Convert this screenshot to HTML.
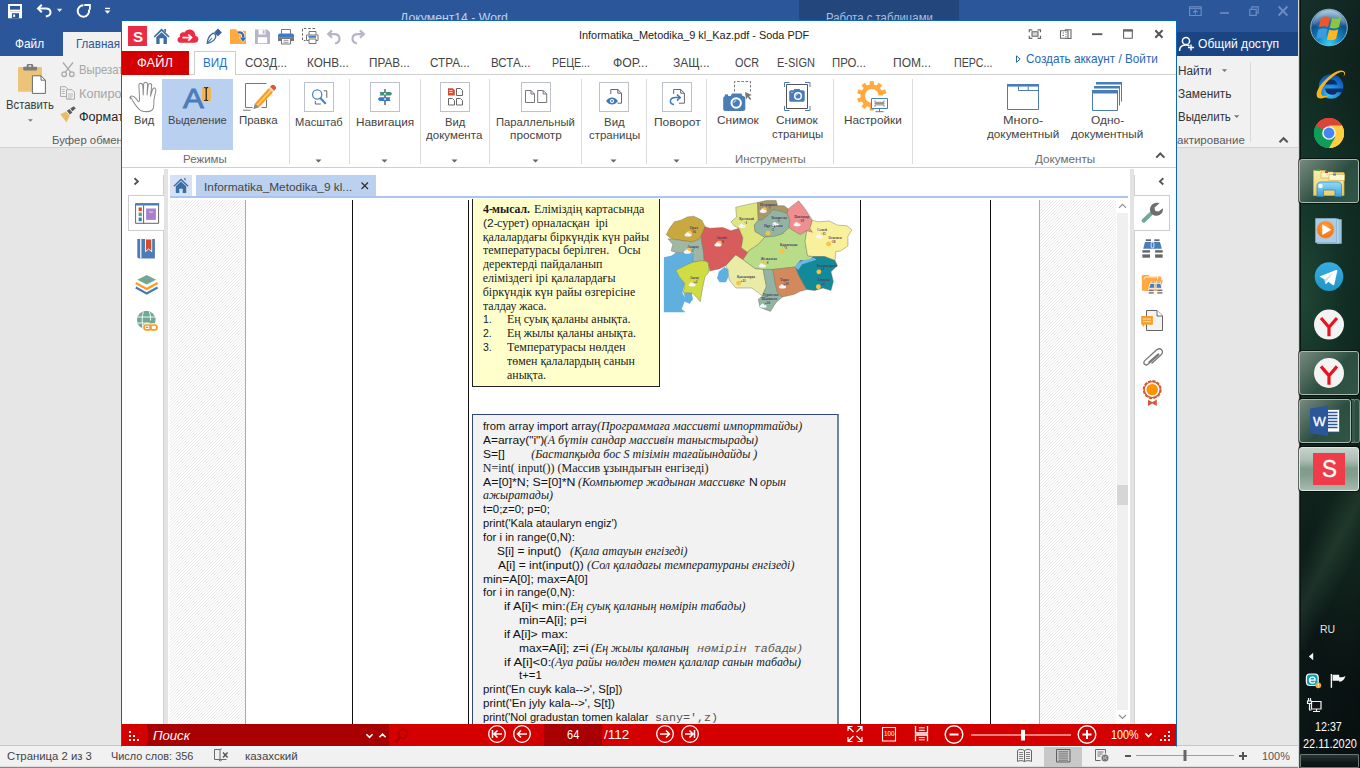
<!DOCTYPE html>
<html lang="ru">
<head>
<meta charset="utf-8">
<title>Informatika_Metodika_9 kl_Kaz.pdf - Soda PDF</title>
<style>
*{box-sizing:border-box;margin:0;padding:0}
html,body{width:1360px;height:768px;overflow:hidden;background:#e6e6e6;font-family:"Liberation Sans",sans-serif;font-size:12px;color:#444}
.g{position:absolute;left:0;top:0;width:0;height:0}
.a{position:absolute}
.t{position:absolute;white-space:pre;display:block}
svg{position:absolute;overflow:visible;pointer-events:none}
.hatch{background:repeating-linear-gradient(135deg,#fdfdfd 0,#fdfdfd 1.25px,#ebebeb 1.25px,#ebebeb 2.1213px)}

</style>
</head>
<body>
<section class="g" id="word-titlebar">
<div class="a" style="left:0px;top:0px;width:1299px;height:56px;background:#2b579a;"></div>
<div class="a" style="left:799px;top:0px;width:160px;height:32px;background:#23467d;"></div>
<span class="t" style="top:11px;font-size:12px;color:#c3d0e6;transform:scaleX(1.0202);transform-origin:0 0;left:399.58px;line-height:14px;">Документ14 - Word</span>
<span class="t" style="top:11px;font-size:12px;color:#aebfdc;transform:scaleX(0.9468);transform-origin:0 0;left:825.58px;line-height:14px;">Работа с таблицами</span>
<svg width="1360" height="768" viewBox="0 0 1360 768" style="left:0;top:0"><g fill="none" stroke="#fff">
<path d="M9 5h12v12.200h-12z" stroke-width="2"/><path d="M9 10.600h12" stroke-width="1.900"/>
<path d="M11.900 17.500v-4.300h7.100v4.300" stroke-width="0" fill="#fff"/>
<path d="M41.800 4.800l-3.800 3.700 3.800 3.700" stroke-width="2"/><path d="M38.500 8.500h7.300c2.800 0 4.700 1.700 4.700 4 0 2-1.600 3.500-4.700 4" stroke-width="2"/>
<path d="M83.400 5.300A5.700 5.700 0 1 0 88.900 9.500" stroke-width="2"/><path d="M84.300 5h5.600v4.800" stroke-width="1.800"/>
</g>
<rect x="10" y="11.500" width="10" height="6" fill="#fff"/><rect x="11.900" y="13.200" width="7.100" height="5" fill="#2b579a"/><rect x="13.200" y="14.500" width="1.900" height="2.400" fill="#fff"/>
<path d="M56.900 8.800h5.300l-2.650 3.100z" fill="#e6ecf6"/>
<path d="M105 8.400h5" stroke="#fff" stroke-width="1.300"/><path d="M104.600 10.600h5.800l-2.900 3.100z" fill="#fff"/>
<g fill="none" stroke="#6d8bc0" stroke-width="1.300">
<path d="M1189.600 6.900h11.600v8.600h-11.600z" stroke-width="1.100"/><path d="M1189.600 8.600h11.600" stroke-width="1"/><path d="M1193.200 12.400l2.200-2.200 2.200 2.200M1195.400 10.600v4" stroke-width="1.100"/>
<path d="M1220 13h9" stroke-width="1.700"/>
<path d="M1249.800 9.400h6.400v6h-6.400zM1251.800 9.400v-2.500h6.400v6h-2" stroke-width="1.200"/>
<path d="M1278.600 6.500l8.800 9M1287.400 6.500l-8.800 9" stroke-width="1.900"/>
</g></svg>
<span class="t" style="top:37px;font-size:12.2px;color:#fff;transform:scaleX(0.9695);transform-origin:0 0;left:14.87px;line-height:14px;">Файл</span>
<div class="a" style="left:63px;top:32px;width:70px;height:24px;background:#f1f1f1;"></div>
<span class="t" style="top:37px;font-size:12.2px;color:#2b579a;transform:scaleX(0.9496);transform-origin:0 0;left:76.07px;line-height:14px;">Главная</span>
<div class="a" style="left:1176px;top:32px;width:123px;height:24px;background:#1b4482;"></div>
<svg width="1360" height="768" viewBox="0 0 1360 768" style="left:0;top:0"><g fill="none" stroke="#fff" stroke-width="1.5"><circle cx="1186" cy="41" r="3.600"/><path d="M1179.500 51c0-4 2.800-6 6.500-6 1.500 0 2.600.3 3.500.9"/><path d="M1191 44.500v6M1188 47.500h6" stroke-width="1.4"/></g></svg>
<span class="t" style="top:37px;font-size:12.2px;color:#fff;transform:scaleX(0.9910);transform-origin:0 0;left:1197.77px;line-height:14px;">Общий доступ</span>
</section>
<section class="g" id="word-ribbon">
<div class="a" style="left:0px;top:56px;width:1299px;height:92px;background:#f1f1f1;border-bottom:1px solid #d2d2d2"></div>
<svg width="1360" height="768" viewBox="0 0 1360 768" style="left:0;top:0"><g>
<rect x="18" y="67" width="24" height="24.800" rx="1.200" fill="#ecc478"/>
<rect x="23.200" y="66.700" width="13.900" height="3.700" rx=".8" fill="#7b7b7b"/><path d="M26.700 67v-1.500c0-1 .6-1.500 1.500-1.500h3.500c.9 0 1.500.5 1.500 1.500v1.500z" fill="#7b7b7b"/><rect x="28.600" y="65.300" width="2.700" height="1.500" fill="#f1f1f1"/>
<path d="M32.400 75.800h8.600l4.400 4.400v13.200h-13z" fill="#fff" stroke="#6a6a6a" stroke-width="1"/><path d="M41 75.800v4.400h4.400" fill="none" stroke="#6a6a6a" stroke-width="1"/>
<path d="M28 119.200h4.800l-2.400 2.600z" fill="#777"/>
</g></svg>
<span class="t" style="top:98px;font-size:12px;color:#3a3a3a;transform:scaleX(0.9423);transform-origin:0 0;left:6.08px;line-height:14px;">Вставить</span>
<svg width="1360" height="768" viewBox="0 0 1360 768" style="left:0;top:0"><g fill="none" stroke="#aaa" stroke-width="1.300"><path d="M63 62.500l8.200 10.300M73 62.500l-8.200 10.300"/><circle cx="64.200" cy="74.200" r="2.300"/><circle cx="71.800" cy="74.200" r="2.300"/></g>
<g fill="#f1f1f1" stroke="#aaa" stroke-width="1"><path d="M60.500 86.700h5l2.200 2.200v7.600h-7.200z"/><path d="M61.800 89.500h3M61.800 91.500h3M61.800 93.500h3" stroke-width=".8"/><path d="M66.500 89.700h5.500l2.500 2.500v7h-8z"/><path d="M68 94h5M68 96h5M68 98h3.500" stroke-width=".8"/></g>
<g><path d="M60.300 114.200l5.800-2.600 3.600 4.200-3.200 6.600z" fill="#e9bb67"/><path d="M66.800 110.800l2.600-1.800 3 3.600-2.600 2z" fill="#5a5a5a"/><path d="M70.300 108.500l3.500-2.300 1.900 2.300-3.300 2.700z" fill="#5a5a5a"/></g></svg>
<span class="t" style="top:63px;font-size:12px;color:#a6a6a6;transform:scaleX(0.9450);transform-origin:0 0;left:78.98px;line-height:14px;">Вырезать</span>
<span class="t" style="top:87px;font-size:12px;color:#a6a6a6;transform:scaleX(1.0590);transform-origin:0 0;left:78.98px;line-height:14px;">Копировать</span>
<span class="t" style="top:110px;font-size:12px;color:#262626;transform:scaleX(1.0495);transform-origin:0 0;left:78.98px;line-height:14px;">Формат по образцу</span>
<span class="t" style="top:133px;font-size:11.8px;color:#5c5c5c;transform:scaleX(0.9620);transform-origin:0 0;left:52.29px;line-height:14px;">Буфер обмена</span>
<span class="t" style="top:64px;font-size:12px;color:#333;transform:scaleX(0.9793);transform-origin:0 0;left:1178.08px;line-height:14px;">Найти</span>
<span class="t" style="top:87px;font-size:12px;color:#333;transform:scaleX(0.9926);transform-origin:0 0;left:1177.58px;line-height:14px;">Заменить</span>
<span class="t" style="top:110px;font-size:12px;color:#333;transform:scaleX(0.9545);transform-origin:0 0;left:1178.08px;line-height:14px;">Выделить</span>
<svg width="1360" height="768" viewBox="0 0 1360 768" style="left:0;top:0"><path d="M1221.800 69.300h5.400l-2.700 2.700zM1234 115.200h5.400l-2.700 2.700z" fill="#777"/><path d="M1250.500 62v80" stroke="#d8d8d8"/><path d="M1279.500 142.300l4.100-4.100 4.100 4.100" fill="none" stroke="#555" stroke-width="2"/></svg>
<span class="t" style="top:133px;font-size:11.8px;color:#5c5c5c;transform:scaleX(0.9772);transform-origin:0 0;left:1157.09px;line-height:14px;">Редактирование</span>
</section>
<section class="g" id="word-statusbar">
<div class="a" style="left:0px;top:745px;width:1299px;height:1px;background:#c6c6c6;"></div>
<div class="a" style="left:0px;top:746px;width:1299px;height:22px;background:#f1f1f1;"></div>
<div class="a" style="left:0px;top:766px;width:1299px;height:1px;background:#dcdcdc;"></div>
<div class="a" style="left:0px;top:767px;width:1299px;height:1px;background:#858585;"></div>
<span class="t" style="top:750px;font-size:11.5px;color:#444;transform:scaleX(0.9849);transform-origin:0 0;left:7.00px;line-height:12px;">Страница 2 из 3</span>
<span class="t" style="top:750px;font-size:11.5px;color:#444;transform:scaleX(0.9465);transform-origin:0 0;left:111.10px;line-height:12px;">Число слов: 356</span>
<svg width="1360" height="768" viewBox="0 0 1360 768" style="left:0;top:0"><g fill="none" stroke="#6a6a6a" stroke-width="1"><path d="M214.500 749.500h5.500v10h-5.500zM220 749.500c.5-.3 1-.5 1.800-.5M220 759.500h6.500M218.500 759.500l1.800 1.800 1.800-1.800"/><path d="M223 752.600l4.600 4.800M227.600 752.600l-4.600 4.800" stroke="#555" stroke-width="1.500"/></g></svg>
<span class="t" style="top:750px;font-size:11.5px;color:#444;transform:scaleX(1.0045);transform-origin:0 0;left:245.10px;line-height:12px;">казахский</span>
<div class="a" style="left:1044px;top:746px;width:38px;height:21px;background:#c8c8c8;"></div>
<svg width="1360" height="768" viewBox="0 0 1360 768" style="left:0;top:0"><g fill="none" stroke="#666" stroke-width="1">
<path d="M1024.500 750.500c-2.500-1.500-5-1.500-7 0v11c2-1.200 4.500-1.200 7 0 2.500-1.200 5-1.200 7 0v-11c-2-1.500-4.500-1.500-7 0zv11"/><path d="M1019 752.500h4M1019 754.500h4M1019 756.500h4M1019 758.500h4M1026 752.500h4M1026 754.500h4M1026 756.500h4M1026 758.500h4" stroke-width=".8"/>
<path d="M1056.500 749.500h13.500v12.500h-13.500z" stroke="#5e5e5e"/><path d="M1058.500 751.800h9.500M1058.500 753.900h9.500M1058.500 756h9.500M1058.500 758.100h9.500M1058.500 760.200h9.500" stroke="#666" stroke-width=".9"/>
<path d="M1095.500 749.500h10v4M1095.500 749.500v11h5"/><path d="M1097.500 752h6M1097.500 754h5M1097.500 756h3" stroke-width=".9"/>
<circle cx="1105" cy="758" r="3.500" fill="#777" stroke="none"/><path d="M1103.500 756.500q1.500 1.500 0 3M1106 756q-1 2 .5 3.500" stroke="#f1f1f1" stroke-width=".7"/>
</g>
<path d="M1125 756h6" stroke="#555" stroke-width="2"/><path d="M1136 755.500h98" stroke="#a0a0a0" stroke-width="1"/><rect x="1183.500" y="750" width="3" height="11" fill="#666"/>
<path d="M1239 756h8M1243 752v8" stroke="#555" stroke-width="2"/></svg>
<span class="t" style="top:750px;font-size:11.5px;color:#555;transform:scaleX(0.9450);transform-origin:0 0;left:1261.60px;line-height:12px;">100%</span>
</section>
<section class="g" id="taskbar">
<div class="a" style="left:1299px;top:0px;width:61px;height:768px;background:#10221d;background:linear-gradient(180deg,#16302b 0,#132c24 8%,#14352a 20%,#163a2d 33%,#14362a 45%,#11291f 58%,#0e1f1a 70%,#0b1716 82%,#0a1414 100%);"></div>
<div class="a" style="left:1299px;top:0px;width:61px;height:768px;background:transparent;background:radial-gradient(ellipse 50px 130px at 60px 560px,rgba(40,80,60,.35),rgba(0,0,0,0) 100%),radial-gradient(ellipse 40px 90px at 5px 300px,rgba(60,110,80,.25),rgba(0,0,0,0) 100%);"></div>
<div class="a" style="left:1301px;top:0px;width:59px;height:768px;background:transparent;background:linear-gradient(90deg,rgba(0,0,0,0) 0,rgba(0,0,0,.12) 55%,rgba(0,0,0,.26) 100%);"></div>
<div class="a" style="left:1298px;top:0px;width:1px;height:768px;background:#d3dad8;"></div>
<div class="a" style="left:1299px;top:0px;width:1px;height:768px;background:#3a4a46;"></div>
<div class="a" style="left:1301px;top:470px;width:59px;height:180px;background:transparent;background:linear-gradient(118deg,rgba(0,0,0,0) 30%,rgba(70,110,85,.28) 48%,rgba(0,0,0,0) 66%);"></div>
<div class="a" style="left:1300px;top:0px;width:1px;height:768px;background:#0a1512;"></div>
<div class="a" style="left:1299px;top:159px;width:60px;height:44px;background:transparent;background:linear-gradient(135deg,#77897f 0,#4f6a5d 30%,#2c4e40 55%,#2f5646 100%);border:1px solid #a9b8b0;border-radius:3px;box-shadow:0 0 0 1px rgba(0,0,0,.55);"></div>
<div class="a" style="left:1299px;top:351px;width:60px;height:44px;background:transparent;background:linear-gradient(135deg,#77897f 0,#4f6a5d 30%,#2c4e40 55%,#2f5646 100%);border:1px solid #a9b8b0;border-radius:3px;box-shadow:0 0 0 1px rgba(0,0,0,.55);"></div>
<div class="a" style="left:1351px;top:399px;width:5px;height:44px;background:transparent;background:#35584a;border:1px solid #7d9388;border-left:none;border-radius:0 3px 3px 0;"></div>
<div class="a" style="left:1355px;top:399px;width:5px;height:44px;background:transparent;background:#2c4d40;border:1px solid #6f867b;border-left:none;border-radius:0 3px 3px 0;"></div>
<div class="a" style="left:1299px;top:399px;width:52px;height:44px;background:transparent;background:linear-gradient(135deg,#77897f 0,#4f6a5d 30%,#2c4e40 55%,#2f5646 100%);border:1px solid #a9b8b0;border-radius:3px;box-shadow:0 0 0 1px rgba(0,0,0,.55);"></div>
<div class="a" style="left:1299px;top:447px;width:60px;height:44px;background:transparent;background:linear-gradient(180deg,#c6d3cb 0,#aebfb4 28%,#7f9c8b 50%,#84a190 68%,#a6baad 100%);border:1px solid #dfe8e3;border-radius:3px;box-shadow:0 0 0 1px rgba(0,0,0,.55);"></div>
<div class="a" style="left:1300px;top:754px;width:59px;height:14px;background:transparent;background:linear-gradient(180deg,#2a3433,#10191a 60%,#0b1213);border:1px solid #6b7775;border-radius:1px;"></div>
<svg width="1360" height="768" viewBox="0 0 1360 768" style="left:0;top:0"><defs>
<radialGradient id="orb" cx=".5" cy=".95" r=".9"><stop offset="0" stop-color="#35d3f5"/><stop offset=".35" stop-color="#1386c4"/><stop offset=".7" stop-color="#0f4f8c"/><stop offset="1" stop-color="#6fa3c8"/></radialGradient>
<linearGradient id="orbhi" x1="0" y1="0" x2="0" y2="1"><stop offset="0" stop-color="#fff" stop-opacity=".75"/><stop offset="1" stop-color="#fff" stop-opacity=".05"/></linearGradient>
<radialGradient id="ieg" cx=".45" cy=".8" r=".8"><stop offset="0" stop-color="#3fc5f5"/><stop offset=".6" stop-color="#1477cf"/><stop offset="1" stop-color="#0d4fa6"/></radialGradient>
<linearGradient id="fold" x1="0" y1="0" x2="0" y2="1"><stop offset="0" stop-color="#fbefad"/><stop offset="1" stop-color="#edcf6a"/></linearGradient>
<linearGradient id="fbl" x1="0" y1="0" x2="0" y2="1"><stop offset="0" stop-color="#8fdcf9"/><stop offset="1" stop-color="#3f9fde"/></linearGradient>
<radialGradient id="wmp" cx=".5" cy=".35" r=".7"><stop offset="0" stop-color="#ffa640"/><stop offset="1" stop-color="#ee6a12"/></radialGradient>
<linearGradient id="tg" x1="0" y1="0" x2="0" y2="1"><stop offset="0" stop-color="#37aee2"/><stop offset="1" stop-color="#1e96c8"/></linearGradient>
</defs>
<!-- orb -->
<circle cx="1329" cy="27.500" r="18.300" fill="url(#orb)" stroke="#8fb0bd" stroke-width="1"/>
<path d="M1312.500 24a16.800 16.800 0 0 1 33 0c-8 5.500-25 5.500-33 0z" fill="url(#orbhi)" opacity=".55"/>
<g transform="translate(1329.700 28.400) scale(1.32) translate(-1328 -26.500)"><path d="M1321.500 18.500c2.300-1.200 4.500-1.400 6.800-.4l-1.600 7.400c-2.300-.9-4.600-.8-6.900.4z" fill="#f0562a"/>
<path d="M1329.800 18.600c2.300.9 4.600.8 6.900-.4l-1.700 7.400c-2.300 1.200-4.600 1.300-6.900.4z" fill="#8cc63f"/>
<path d="M1319.400 27.400c2.300-1.200 4.600-1.300 6.900-.4l-1.700 7.400c-2.300-.9-4.600-.8-6.900.4z" fill="#3a9be0"/>
<path d="M1327.600 27.500c2.300.9 4.600.8 6.900-.4l-1.700 7.400c-2.300 1.200-4.600 1.300-6.900.4z" fill="#fcb81e"/></g>
<!-- IE -->
<circle cx="1331" cy="86.500" r="12.200" fill="url(#ieg)"/>
<path d="M1325 84.600c.6-3.200 3-5.200 6.200-5.200s5.600 2 6.100 5.200z" fill="#0b2f6e"/>
<path d="M1325 88.600h18.500c-.1 1.300-.4 2.500-.9 3.600h-5.500c-1 1.600-2.800 2.600-5.300 2.600-3.700 0-6.300-2.400-6.800-6.200z" fill="#0b2f6e"/>
<path d="M1345 72.500c-1.500-3.500-8-2.500-15.500 3.500-8.500 6.800-14.500 16-12.500 20.500 1.600 3.500 7.500 2 13-1.500-4 1.500-7.500 1.500-8.500-.8-1.500-3.500 3-10.500 10-16.500 6-5 11.500-7 12.500-4.500.4 1-.1 2.500-.8 4 1.500-2 2.300-3.600 1.800-4.700z" fill="#f7b51b"/>
<!-- chrome -->
<circle cx="1329" cy="133" r="15" fill="#db4437"/><path d="M1329 133L1316.01 125.50A15 15 0 0 1 1341.99 125.50z" fill="#db4437"/><path d="M1329 133L1341.99 125.50A15 15 0 0 1 1329.00 148.00z" fill="#ffcd40"/><path d="M1329 133L1329.00 148.00A15 15 0 0 1 1316.01 125.50z" fill="#0f9d58"/>
<path d="M1329 133L1316.010 125.500A15 15 0 0 1 1341.990 125.500z" fill="#db4437"/>
<path d="M1316.010 125.500A15 15 0 0 1 1341.990 125.500L1329 125.500z" fill="#db4437"/>
<path d="M1341.990 125.500A15 15 0 0 1 1329 148L1335.500 136.750 1329 133z" fill="#ffcd40"/>
<path d="M1341.990 125.500L1329 125.500 1335.500 136.750 1329 148A15 15 0 0 0 1341.990 125.500z" fill="#ffcd40"/>
<path d="M1329 148A15 15 0 0 1 1316.010 125.500L1322.500 136.750 1329 133z" fill="#0f9d58"/>
<path d="M1316.010 125.500L1322.500 136.750 1335.500 136.750 1329 148A15 15 0 0 1 1316.010 125.500z" fill="#0f9d58"/>
<circle cx="1329" cy="133" r="6.800" fill="#f1f1f1"/><circle cx="1329" cy="133" r="5.400" fill="#4285f4"/>
<!-- explorer -->
<path d="M1313.500 170.500h12l1.500 2h17v23h-30.500z" fill="url(#fold)" stroke="#c9a94a" stroke-width=".8"/>
<path d="M1321 172h12l1.500 2h10v4h-23.500z" fill="#fdf3c0" stroke="#c9a94a" stroke-width=".6"/>
<path d="M1329 174.500h15.500v6h-15.500z" fill="#fff7cf" stroke="#c9a94a" stroke-width=".6"/>
<rect x="1316.500" y="169" width="3.500" height="2" fill="#1fb141"/><rect x="1325" y="171" width="3" height="2" fill="#e03a2c"/><rect x="1333" y="173.500" width="3" height="2" fill="#2f8fe8"/>
<path d="M1317 196.500v-10.500c0-2.500 1.500-4 4-4h16.500c2.500 0 4 1.500 4 4v10.500h-6.500v-6.500h-11.500v6.500z" fill="url(#fbl)" stroke="#2c7fc0" stroke-width=".7"/>
<circle cx="1320.500" cy="186" r="2.300" fill="#fff" opacity=".9"/>
<!-- WMP -->
<path d="M1318.500 219.500h23v24h-23z" fill="#9fc6de" stroke="#7aa6c4" stroke-width=".6"/>
<path d="M1317 219h22v24.500h-22z" fill="#b5d6ea" stroke="#86b2cf" stroke-width=".6"/>
<path d="M1315.500 218.500h21v24h-21z" fill="#a9cde5" stroke="#7eaccb" stroke-width=".7"/>
<circle cx="1325.500" cy="229.700" r="8.600" fill="url(#wmp)" stroke="#e8a96a" stroke-width=".8"/>
<path d="M1322.300 224.300v10.800l9-5.400z" fill="#fff"/>
<!-- telegram -->
<circle cx="1329" cy="276.600" r="14.300" fill="url(#tg)"/>
<path d="M1319.500 276.500l16.500-6.500c.9-.3 1.400.2 1.200 1.200l-2.800 13c-.2 1-.9 1.200-1.700.7l-4.300-3.200-2.100 2c-.4.400-.8.300-.9-.3l-.9-3.800z" fill="#fff"/>
<path d="M1324.500 279.600l9.300-7-7 8-1.400 3z" fill="#c8daea"/>
<!-- yandex x2 -->
<circle cx="1329" cy="324.600" r="15" fill="#f3f3f3"/><path d="M1321 318l8 9.300v9M1337 318l-8 9.300" fill="none" stroke="#e8121d" stroke-width="3.200" stroke-linecap="butt"/>
<circle cx="1329" cy="373" r="15" fill="#f3f3f3"/><path d="M1321 366.400l8 9.300v9M1337 366.400l-8 9.300" fill="none" stroke="#e8121d" stroke-width="3.200"/>
<!-- word -->
<path d="M1326 409.500h13.500v22.500h-13.500z" fill="#fff" stroke="#2b579a" stroke-width=".8"/>
<path d="M1328 412.500h9.500M1328 415.500h9.500M1328 418.500h9.500M1328 421.500h9.500M1328 424.500h9.500M1328 427.500h9.500" stroke="#2b579a" stroke-width="1.300"/>
<path d="M1310 408.500l18-2.800v30.300l-18-2.800z" fill="#2b579a"/>
<!-- soda -->
<rect x="1313" y="453" width="32" height="32" fill="#ee3d48"/>
<!-- tray -->
<path d="M1313.200 652.800v7.400l-4.400-3.700z" fill="#f2f2f2"/>
<rect x="1305.800" y="673.500" width="13" height="12.500" rx="4" fill="#fff"/><rect x="1307" y="674.600" width="10.600" height="10.300" rx="3.200" fill="#0f9fb4"/>
<path d="M1309.600 680.200h5.500c0-2-1.100-3.100-2.700-3.100-1.700 0-2.900 1.200-2.900 3 0 1.800 1.200 3 3 3 1 0 1.900-.4 2.400-1.200" fill="none" stroke="#fff" stroke-width="1.300"/>
<circle cx="1318.300" cy="685.300" r="2.900" fill="#f5a623"/><path d="M1318.300 683.600v2" stroke="#fff" stroke-width=".9"/><circle cx="1318.300" cy="686.700" r=".5" fill="#fff"/>
<path d="M1331.400 674v13.800" stroke="#f4f4f4" stroke-width="1.400"/><path d="M1332.600 674.800h6.600v2.200c2 .7 4 .3 6.200-.9-.8 3.600-3 5.800-6.200 5.600v-.9h-6.600z" fill="#f4f4f4"/>
<g fill="none" stroke="#f2f2f2" stroke-width="1.200"><path d="M1311.500 701.500h9.500v7.500h-9.500z" fill="#111"/><path d="M1313 711.500h7M1316.500 709v2.500"/><path d="M1308.500 698v3M1310.500 698v3M1307.500 701h4v2.500h-4zM1309.500 703.500v6.500h2"/></g>
</svg>
<span class="t" style="top:414px;font-size:13px;color:#fff;transform:scaleX(1.0431);transform-origin:0 0;left:1312.85px;line-height:15px;-webkit-text-stroke:.3px #fff;">W</span>
<span class="t" style="top:456px;font-size:23.6px;color:#fff;transform:scaleX(0.9493);transform-origin:0 0;left:1321.97px;line-height:26px;-webkit-text-stroke:.35px #fff;">S</span>
<span class="t" style="top:623px;font-size:11.5px;color:#e2e2e2;transform:scaleX(0.9086);transform-origin:0 0;left:1320.30px;line-height:12px;">RU</span>
<span class="t" style="top:720px;font-size:12px;color:#fff;transform:scaleX(0.8937);transform-origin:0 0;left:1315.08px;line-height:14px;">12:37</span>
<span class="t" style="top:737px;font-size:12px;color:#fff;transform:scaleX(0.9099);transform-origin:0 0;left:1302.58px;line-height:14px;">22.11.2020</span>
</section>
<section class="g" id="soda-window">
<div class="a" style="left:121px;top:20px;width:1056px;height:727px;background:#fff;border:1px solid #0b66c2;border-bottom:1px solid #f6fbfb;"></div>
</section>
<section class="g" id="soda-titlebar">
<div class="a" style="left:128px;top:26px;width:19px;height:20px;background:#ea2c44;"></div>
<span class="t" style="top:29px;font-size:14.6px;color:#fff;font-weight:700;transform:scaleX(1.0398);transform-origin:0 0;left:133.29px;line-height:16px;">S</span>
<svg width="1360" height="768" viewBox="0 0 1360 768" style="left:0;top:0"><!-- home -->
<g fill="#3a6ea5"><path d="M161.600 28.600l8 7.800-1.200 1.200-6.800-6.500-6.800 6.500-1.200-1.200z"/><path d="M156.300 37.300l5.300-5 5.300 5v6.700h-3.400v-5.700h-3.900v5.700h-3.300z"/><path d="M164.200 29h1.800v3.400l-1.800-1.700z"/></g>
<!-- cloud -->
<path d="M181 42.800h13.500c2.400 0 3.900-1.600 3.900-3.500 0-1.800-1.200-3.200-3-3.500 0-3.700-2.500-6.300-5.800-6.300-2.200 0-4 1.100-5 3-.5-.2-1-.3-1.500-.3-1.900 0-3.300 1.400-3.300 3.200 0 .6.100 1.100.4 1.600h-0.200c-1.500 0-2.500 1.300-2.500 2.900s1.300 2.900 3.500 2.900z" fill="#ea2c44"/>
<path d="M182.400 37.600h8.800" stroke="#fff" stroke-width="1.700"/><path d="M188.300 34.500l3.200 3.100-3.200 3.100" fill="none" stroke="#fff" stroke-width="1.700"/>
<!-- pen -->
<path d="M218 28.500l3.900 3.900-3.900 3.900-3.900-3.900z" fill="#3a62a0"/>
<path d="M215.700 35c.8 4-3.500 7.600-8.500 8.400.2-4.200 2.300-8 6-10.300z" fill="#fff" stroke="#3a6ea5" stroke-width="1.300" stroke-linejoin="round"/><path d="M207.400 43.200l4.600-5.200" stroke="#3a6ea5" stroke-width="1.100"/>
<!-- folder -->
<path d="M230 29.200h6l1.200 1.600h8.800v13.200h-16z" fill="#ffa93f"/>
<path d="M238 32.600c3.500-.9 5.700 1 5.200 5" fill="none" stroke="#fff" stroke-width="4"/><path d="M238.800 36.900h8.600l-4.300 5.900z" fill="#fff"/>
<path d="M238 32.600c3.500-.9 5.700 1 5.200 5" fill="none" stroke="#3a6ea5" stroke-width="2.400"/><path d="M239.800 37.400h6.600l-3.300 4.500z" fill="#3a6ea5"/>
<!-- save -->
<path d="M255 29.500h12.200l2.800 2.800v11.700h-15z" fill="#b6b4c6"/><path d="M258.500 29.500h7v5h-7z" fill="#fff"/><path d="M262.700 30.300h1.800v3.300h-1.800z" fill="#b6b4c6"/><path d="M257.800 37.200h9.400v6h-9.400z" fill="#fff"/>
<!-- printer -->
<path d="M281.500 34v-4.500h9v4.500" fill="#fff" stroke="#777" stroke-width="1"/>
<path d="M278 35.500c0-1.200.8-2 2-2h12c1.200 0 2 .8 2 2v2h-16z" fill="#3f7cc4"/><path d="M278 37.300h16v3.700h-16z" fill="#757575"/>
<path d="M281.500 38.500h9v5.500h-9z" fill="#fff" stroke="#777" stroke-width="1"/><path d="M283.500 40.300h5M283.500 42.300h5" stroke="#777" stroke-width=".8"/>
<!-- print area -->
<path d="M315 28.500h-12.500v12h3" fill="none" stroke="#666" stroke-width="1" stroke-dasharray="2.500 1.800"/>
<path d="M309 35v-3.500h7v3.500" fill="#fff" stroke="#777" stroke-width="1"/><path d="M306.500 35h11.500v5.500h-11.500z" fill="#fff" stroke="#777" stroke-width="1"/><path d="M308.500 35.800h7.500v2h-7.500z" fill="#3f7cc4"/><path d="M309 39h7v4.500h-7z" fill="#fff" stroke="#777" stroke-width="1"/>
<!-- undo / redo -->
<g fill="none" stroke="#b6b4c6" stroke-width="2.200"><path d="M332 30.500l-3.800 3.600 3.800 3.600"/><path d="M328.500 34.100h5.500c3.500 0 5.500 2 5.500 4.600 0 2.200-1.500 4-4.500 4.800"/>
<path d="M360 30.500l3.800 3.600-3.800 3.600"/><path d="M363.500 34.100h-5.500c-3.500 0-5.500 2-5.500 4.600 0 2.200 1.500 4 4.500 4.800"/></g>
<!-- window controls -->
<g fill="none" stroke="#666" stroke-width="1.200"><path d="M1029.300 32.300v-2.500h3M1037.500 29.800h3v2.500M1040.500 35.800v2.500h-3M1032.300 38.300h-3v-2.500"/><path d="M1032 31.800h6v4.500h-6z" fill="#d4d4d4" stroke-width="1.100"/></g>
<g fill="#fff" stroke="#666" stroke-width="1.100"><path d="M1065.500 29.800h5.500v8.700h-5.500z"/><path d="M1060.500 30.800h7.500v7.500h-7.500z"/><path d="M1062.500 33h1.500M1062.500 35.500h1.500M1065.500 32.500h1M1065.500 34.500h1M1065.500 36.500h1" stroke-width=".9"/></g>
<path d="M1092 34.200h10.300" stroke="#555" stroke-width="1.800"/>
<path d="M1123.600 30.500h8.700v7.700h-8.700z" fill="none" stroke="#666" stroke-width="1.100"/><path d="M1123 30.400h9.900" stroke="#666" stroke-width="2.400"/>
<path d="M1155.300 30.300l7.200 7.500M1162.500 30.300l-7.200 7.500" stroke="#555" stroke-width="2"/>
</svg>
<span class="t" style="top:29px;font-size:10.8px;color:#222;transform:scaleX(1.0096);transform-origin:0 0;left:578.62px;line-height:12px;">Informatika_Metodika_9 kl_Kaz.pdf - Soda PDF</span>
</section>
<section class="g" id="soda-tabs">
<div class="a" style="left:122px;top:74px;width:1054px;height:1px;background:#cfcfcf;"></div>
<div class="a" style="left:122px;top:51px;width:67px;height:24px;background:#d40000;"></div>
<span class="t" style="top:56px;font-size:12.5px;color:#fff;transform:scaleX(1.0319);transform-origin:0 0;left:136.56px;line-height:14px;">ФАЙЛ</span>
<div class="a" style="left:194px;top:51px;width:42px;height:24px;background:#fff;border:1px solid #cdcdcd;border-bottom:none;"></div>
<span class="t" style="top:56px;font-size:12.5px;color:#1f6fd0;transform:scaleX(0.9333);transform-origin:0 0;left:203.36px;line-height:14px;">ВИД</span>
<span class="t" style="top:56px;font-size:12.5px;color:#444;transform:scaleX(0.9322);transform-origin:0 0;left:244.56px;line-height:14px;">СОЗД...</span>
<span class="t" style="top:56px;font-size:12.5px;color:#444;transform:scaleX(0.9377);transform-origin:0 0;left:306.56px;line-height:14px;">КОНВ...</span>
<span class="t" style="top:56px;font-size:12.5px;color:#444;transform:scaleX(0.9376);transform-origin:0 0;left:368.56px;line-height:14px;">ПРАВ...</span>
<span class="t" style="top:56px;font-size:12.5px;color:#444;transform:scaleX(0.9379);transform-origin:0 0;left:429.56px;line-height:14px;">СТРА...</span>
<span class="t" style="top:56px;font-size:12.5px;color:#444;transform:scaleX(0.9261);transform-origin:0 0;left:490.56px;line-height:14px;">ВСТА...</span>
<span class="t" style="top:56px;font-size:12.5px;color:#444;transform:scaleX(0.8476);transform-origin:0 0;left:551.56px;line-height:14px;">РЕЦЕ...</span>
<span class="t" style="top:56px;font-size:12.5px;color:#444;transform:scaleX(0.9789);transform-origin:0 0;left:612.56px;line-height:14px;">ФОР...</span>
<span class="t" style="top:56px;font-size:12.5px;color:#444;transform:scaleX(0.9643);transform-origin:0 0;left:673.26px;line-height:14px;">ЗАЩ...</span>
<span class="t" style="top:56px;font-size:12.5px;color:#444;transform:scaleX(0.8666);transform-origin:0 0;left:735.06px;line-height:14px;">OCR</span>
<span class="t" style="top:56px;font-size:12.5px;color:#444;transform:scaleX(0.8795);transform-origin:0 0;left:776.56px;line-height:14px;">E-SIGN</span>
<span class="t" style="top:56px;font-size:12.5px;color:#444;transform:scaleX(0.9105);transform-origin:0 0;left:832.16px;line-height:14px;">ПРО...</span>
<span class="t" style="top:56px;font-size:12.5px;color:#444;transform:scaleX(0.9603);transform-origin:0 0;left:892.96px;line-height:14px;">ПОМ...</span>
<span class="t" style="top:56px;font-size:12.5px;color:#444;transform:scaleX(0.8556);transform-origin:0 0;left:954.16px;line-height:14px;">ПЕРС...</span>
<svg width="1360" height="768" viewBox="0 0 1360 768" style="left:0;top:0"><path d="M1016.500 55.900l3.600 3.200-3.600 3.200z" fill="none" stroke="#2468b8" stroke-width="1"/></svg>
<span class="t" style="top:52px;font-size:12.2px;color:#2468b8;transform:scaleX(0.9643);transform-origin:0 0;left:1026.07px;line-height:14px;">Создать аккаунт / Войти</span>
</section>
<section class="g" id="soda-ribbon">
<div class="a" style="left:122px;top:167px;width:1054px;height:1px;background:#cfcfcf;"></div>
<div class="a" style="left:162px;top:79px;width:71px;height:71px;background:#bad0f0;"></div>
<div class="a" style="left:289px;top:79px;width:1px;height:85px;background:#dcdcdc;"></div>
<div class="a" style="left:349px;top:79px;width:1px;height:85px;background:#dcdcdc;"></div>
<div class="a" style="left:420px;top:79px;width:1px;height:85px;background:#dcdcdc;"></div>
<div class="a" style="left:489px;top:79px;width:1px;height:85px;background:#dcdcdc;"></div>
<div class="a" style="left:581px;top:79px;width:1px;height:85px;background:#dcdcdc;"></div>
<div class="a" style="left:646px;top:79px;width:1px;height:85px;background:#dcdcdc;"></div>
<div class="a" style="left:706px;top:79px;width:1px;height:85px;background:#dcdcdc;"></div>
<div class="a" style="left:833px;top:79px;width:1px;height:85px;background:#dcdcdc;"></div>
<div class="a" style="left:912px;top:79px;width:1px;height:85px;background:#dcdcdc;"></div>
<div class="a" style="left:304px;top:82px;width:30px;height:30px;background:#fff;border:1px solid #bdc1cb;"></div>
<div class="a" style="left:370px;top:82px;width:30px;height:30px;background:#fff;border:1px solid #bdc1cb;"></div>
<div class="a" style="left:440px;top:82px;width:30px;height:30px;background:#fff;border:1px solid #bdc1cb;"></div>
<div class="a" style="left:521px;top:82px;width:30px;height:30px;background:#fff;border:1px solid #bdc1cb;"></div>
<div class="a" style="left:599px;top:82px;width:30px;height:30px;background:#fff;border:1px solid #bdc1cb;"></div>
<div class="a" style="left:662px;top:82px;width:30px;height:30px;background:#fff;border:1px solid #bdc1cb;"></div>
<span class="t" style="top:114px;font-size:10.7px;color:#444;transform:scaleX(1.0468);transform-origin:0 0;left:134.13px;line-height:12px;">Вид</span>
<span class="t" style="top:114px;font-size:10.7px;color:#444;transform:scaleX(1.0372);transform-origin:0 0;left:168.13px;line-height:12px;">Выделение</span>
<span class="t" style="top:114px;font-size:10.7px;color:#444;transform:scaleX(1.0731);transform-origin:0 0;left:239.13px;line-height:12px;">Правка</span>
<span class="t" style="top:153px;font-size:10.7px;color:#6b6b6b;transform:scaleX(1.0765);transform-origin:0 0;left:183.13px;line-height:12px;">Режимы</span>
<span class="t" style="top:116px;font-size:10.7px;color:#444;transform:scaleX(1.0441);transform-origin:0 0;left:295.13px;line-height:12px;">Масштаб</span>
<span class="t" style="top:116px;font-size:10.7px;color:#444;transform:scaleX(1.1033);transform-origin:0 0;left:355.63px;line-height:12px;">Навигация</span>
<span class="t" style="top:116px;font-size:10.7px;color:#444;transform:scaleX(1.0520);transform-origin:0 0;left:445.23px;line-height:12px;">Вид</span>
<span class="t" style="top:129px;font-size:10.7px;color:#444;transform:scaleX(1.0810);transform-origin:0 0;left:426.43px;line-height:12px;">документа</span>
<span class="t" style="top:116px;font-size:10.7px;color:#444;transform:scaleX(1.0509);transform-origin:0 0;left:496.13px;line-height:12px;">Параллельный</span>
<span class="t" style="top:129px;font-size:10.7px;color:#444;transform:scaleX(1.1029);transform-origin:0 0;left:509.63px;line-height:12px;">просмотр</span>
<span class="t" style="top:116px;font-size:10.7px;color:#444;transform:scaleX(1.0726);transform-origin:0 0;left:603.63px;line-height:12px;">Вид</span>
<span class="t" style="top:129px;font-size:10.7px;color:#444;transform:scaleX(1.0719);transform-origin:0 0;left:588.63px;line-height:12px;">страницы</span>
<span class="t" style="top:116px;font-size:10.7px;color:#444;transform:scaleX(1.1214);transform-origin:0 0;left:653.63px;line-height:12px;">Поворот</span>
<span class="t" style="top:114px;font-size:10.7px;color:#444;transform:scaleX(1.1115);transform-origin:0 0;left:717.13px;line-height:12px;">Снимок</span>
<span class="t" style="top:114px;font-size:10.7px;color:#444;transform:scaleX(1.1115);transform-origin:0 0;left:776.13px;line-height:12px;">Снимок</span>
<span class="t" style="top:128px;font-size:10.7px;color:#444;transform:scaleX(1.0719);transform-origin:0 0;left:771.63px;line-height:12px;">страницы</span>
<span class="t" style="top:153px;font-size:10.7px;color:#6b6b6b;transform:scaleX(1.0616);transform-origin:0 0;left:735.13px;line-height:12px;">Инструменты</span>
<span class="t" style="top:114px;font-size:10.7px;color:#444;transform:scaleX(1.1019);transform-origin:0 0;left:844.13px;line-height:12px;">Настройки</span>
<span class="t" style="top:114px;font-size:10.7px;color:#444;transform:scaleX(1.1865);transform-origin:0 0;left:1003.13px;line-height:12px;">Много-</span>
<span class="t" style="top:128px;font-size:10.7px;color:#444;transform:scaleX(1.0973);transform-origin:0 0;left:986.63px;line-height:12px;">документный</span>
<span class="t" style="top:114px;font-size:10.7px;color:#444;transform:scaleX(1.1182);transform-origin:0 0;left:1091.13px;line-height:12px;">Одно-</span>
<span class="t" style="top:128px;font-size:10.7px;color:#444;transform:scaleX(1.0973);transform-origin:0 0;left:1070.63px;line-height:12px;">документный</span>
<span class="t" style="top:153px;font-size:10.7px;color:#6b6b6b;transform:scaleX(1.0936);transform-origin:0 0;left:1034.63px;line-height:12px;">Документы</span>
<svg width="1360" height="768" viewBox="0 0 1360 768" style="left:0;top:0"><path d="M315.500 159.500h6l-3 3zM381.500 159.500h6l-3 3zM451.500 159.500h6l-3 3zM532.500 159.500h6l-3 3zM610.500 159.500h6l-3 3zM673.500 159.500h6l-3 3z" fill="#666"/><path d="M1156.200 157.600l4.100-4.100 4.100 4.100" fill="none" stroke="#555" stroke-width="2"/></svg>
</section>
<section class="g" id="soda-doctabs">
<div class="a" style="left:164px;top:169px;width:4px;height:555px;background:#e3e3e3;"></div>
<div class="a" style="left:1130px;top:169px;width:4px;height:555px;background:#e3e3e3;"></div>
<div class="a" style="left:170px;top:175px;width:22px;height:22px;background:#d6e2f4;"></div>
<div class="a" style="left:196px;top:175px;width:180px;height:22px;background:#bcd1f0;"></div>
<div class="a" style="left:170px;top:196px;width:958px;height:2px;background:#aac5ef;"></div>
<svg width="1360" height="768" viewBox="0 0 1360 768" style="left:0;top:0"><g fill="#3a6ea5"><path d="M181 178.500l7.600 7.300-.9.900-6.700-6.300-6.700 6.300-.9-.9z"/><path d="M175.800 186.300l5.200-4.900 5.200 4.900v6.700h-3.500v-4.300h-3.400v4.300h-3.500z"/><path d="M184 178.300h1.600v2.500l-1.600-1.500z"/></g>
<path d="M361.500 182.500l6.500 6.500M368 182.500l-6.500 6.500" stroke="#333" stroke-width="1.300"/>
<path d="M134.500 178.300l3.400 3.100-3.400 3.100" fill="none" stroke="#555" stroke-width="1.900"/>
<path d="M1163.300 178.300l-3.400 3.100 3.400 3.100" fill="none" stroke="#555" stroke-width="1.900"/></svg>
<span class="t" style="top:181px;font-size:11px;color:#454545;transform:scaleX(1.0777);transform-origin:0 0;left:203.62px;line-height:12px;">Informatika_Metodika_9 kl...</span>
</section>
<section class="g" id="soda-sidepanels">
<div class="a" style="left:163px;top:175px;width:1px;height:549px;background:#d2d2d2;"></div>
<div class="a" style="left:128px;top:195px;width:36px;height:36px;background:#fff;border:1px solid #cdcdcd;border-right:none;"></div>
<div class="a" style="left:1134px;top:175px;width:1px;height:549px;background:#d2d2d2;"></div>
<div class="a" style="left:1134px;top:195px;width:36px;height:36px;background:#fff;border:1px solid #cdcdcd;border-left:none;"></div>
</section>
<section class="g" id="soda-document">
<div class="a hatch" style="left:170px;top:199.500px;width:75px;height:524.500px"></div>
<div class="a hatch" style="left:1040px;top:199.500px;width:76px;height:524.500px"></div>
<div class="a" style="left:245px;top:200px;width:1px;height:524px;background:#ababab;"></div>
<div class="a" style="left:1039px;top:200px;width:1px;height:524px;background:#ababab;"></div>
<div class="a" style="left:1117px;top:199px;width:11px;height:525px;background:#fff;"></div>
<div class="a" style="left:1117px;top:213px;width:11px;height:497px;background:#f0f0f0;"></div>
<div class="a" style="left:1117px;top:485px;width:11px;height:20px;background:#d6d6d6;"></div>
<svg width="1360" height="768" viewBox="0 0 1360 768" style="left:0;top:0"><path d="M1119 207.800l3.500-3.500 3.500 3.500M1119 715l3.500 3.500 3.500-3.500" fill="none" stroke="#8f8f8f" stroke-width="1.200"/></svg>
<div class="a" style="left:352px;top:200px;width:1.2px;height:524px;background:#111;"></div>
<div class="a" style="left:468px;top:200px;width:1.2px;height:524px;background:#111;"></div>
<div class="a" style="left:860px;top:200px;width:1.2px;height:524px;background:#111;"></div>
<div class="a" style="left:990px;top:200px;width:1.2px;height:524px;background:#111;"></div>
<div class="a" style="left:472px;top:199px;width:188px;height:188px;background:#ffffcc;border:1px solid #222;border-top:none;border-right:1.5px solid #222;border-bottom:1.5px solid #222;"></div>
<span class="t" style="top:202px;font-size:12px;color:#1a1a1a;font-family:'Liberation Serif',serif;font-weight:700;transform:scaleX(0.9980);transform-origin:0 0;left:482.76px;line-height:14px;">4-</span>
<span class="t" style="top:202px;font-size:12px;color:#1a1a1a;font-family:'Liberation Serif',serif;font-weight:700;transform:scaleX(0.9774);transform-origin:0 0;left:492.26px;line-height:14px;">мысал.</span>
<span class="t" style="top:202px;font-size:12px;color:#1a1a1a;font-family:'Liberation Serif',serif;transform:scaleX(1.0067);transform-origin:0 0;left:533.76px;line-height:14px;">Еліміздің картасында</span>
<span class="t" style="top:217px;font-size:11.5px;color:#1a1a1a;transform:scaleX(1.0528);transform-origin:0 0;left:482.60px;line-height:12px;">(2-</span>
<span class="t" style="top:216px;font-size:12px;color:#1a1a1a;font-family:'Liberation Serif',serif;transform:scaleX(0.9973);transform-origin:0 0;left:497.06px;line-height:14px;">сурет) орналасқан  ірі</span>
<span class="t" style="top:230px;font-size:12px;color:#1a1a1a;font-family:'Liberation Serif',serif;left:482.76px;line-height:14px;">қалалардағы біркүндік күн райы</span>
<span class="t" style="top:243px;font-size:12px;color:#1a1a1a;font-family:'Liberation Serif',serif;transform:scaleX(1.0038);transform-origin:0 0;left:482.76px;line-height:14px;">температурасы берілген.   Осы</span>
<span class="t" style="top:257px;font-size:12px;color:#1a1a1a;font-family:'Liberation Serif',serif;transform:scaleX(1.0022);transform-origin:0 0;left:482.76px;line-height:14px;">деректерді пайдаланып</span>
<span class="t" style="top:271px;font-size:12px;color:#1a1a1a;font-family:'Liberation Serif',serif;left:482.76px;line-height:14px;">еліміздегі ірі қалалардағы</span>
<span class="t" style="top:285px;font-size:12px;color:#1a1a1a;font-family:'Liberation Serif',serif;left:482.76px;line-height:14px;">біркүндік күн райы өзгерісіне</span>
<span class="t" style="top:299px;font-size:12px;color:#1a1a1a;font-family:'Liberation Serif',serif;transform:scaleX(0.9909);transform-origin:0 0;left:482.76px;line-height:14px;">талдау жаса.</span>
<span class="t" style="top:313px;font-size:11px;color:#1a1a1a;transform:scaleX(0.9546);transform-origin:0 0;left:482.62px;line-height:12px;">1.</span>
<span class="t" style="top:312px;font-size:12px;color:#1a1a1a;font-family:'Liberation Serif',serif;transform:scaleX(0.9939);transform-origin:0 0;left:506.76px;line-height:14px;">Ең суық қаланы анықта.</span>
<span class="t" style="top:327px;font-size:11px;color:#1a1a1a;transform:scaleX(0.9546);transform-origin:0 0;left:482.62px;line-height:12px;">2.</span>
<span class="t" style="top:326px;font-size:12px;color:#1a1a1a;font-family:'Liberation Serif',serif;transform:scaleX(0.9954);transform-origin:0 0;left:506.76px;line-height:14px;">Ең жылы қаланы анықта.</span>
<span class="t" style="top:341px;font-size:11px;color:#1a1a1a;transform:scaleX(0.9546);transform-origin:0 0;left:482.62px;line-height:12px;">3.</span>
<span class="t" style="top:340px;font-size:12px;color:#1a1a1a;font-family:'Liberation Serif',serif;transform:scaleX(1.0073);transform-origin:0 0;left:506.76px;line-height:14px;">Температурасы нөлден</span>
<span class="t" style="top:354px;font-size:12px;color:#1a1a1a;font-family:'Liberation Serif',serif;transform:scaleX(0.9943);transform-origin:0 0;left:506.76px;line-height:14px;">төмен қалалардың санын</span>
<span class="t" style="top:368px;font-size:12px;color:#1a1a1a;font-family:'Liberation Serif',serif;transform:scaleX(0.9904);transform-origin:0 0;left:506.76px;line-height:14px;">анықта.</span>
<div class="a" style="left:472px;top:414px;width:367px;height:310px;background:#f2f2f2;border:1.2px solid #2f4785;border-right:2px solid #7283ab;border-bottom:none;"></div>
<span class="t" style="top:419px;font-size:11.7px;color:#111;transform:scaleX(0.9576);transform-origin:0 0;left:482.59px;line-height:13px;">from array import array</span>
<span class="t" style="top:419px;font-size:12px;color:#1a1a1a;font-family:'Liberation Serif',serif;font-style:italic;transform:scaleX(0.9958);transform-origin:0 0;left:597.06px;line-height:14px;">(Программаға массивті импорттайды)</span>
<span class="t" style="top:433px;font-size:11.7px;color:#111;transform:scaleX(1.0230);transform-origin:0 0;left:482.59px;line-height:13px;">A=array("i")</span>
<span class="t" style="top:433px;font-size:12px;color:#1a1a1a;font-family:'Liberation Serif',serif;font-style:italic;left:543.76px;line-height:14px;">(А бүтін сандар массивін таныстырады)</span>
<span class="t" style="top:447px;font-size:11.7px;color:#111;transform:scaleX(1.0329);transform-origin:0 0;left:482.59px;line-height:13px;">S=[]</span>
<span class="t" style="top:447px;font-size:12px;color:#1a1a1a;font-family:'Liberation Serif',serif;font-style:italic;left:531.26px;line-height:14px;">(Бастапқыда бос S тізімін тағайындайды )</span>
<span class="t" style="top:461px;font-size:12px;color:#1a1a1a;font-family:'Liberation Serif',serif;left:482.76px;line-height:14px;">N=int( input()) (Массив ұзындығын енгізеді)</span>
<span class="t" style="top:475px;font-size:11.7px;color:#111;transform:scaleX(1.0526);transform-origin:0 0;left:482.59px;line-height:13px;">A=[0]*N; S=[0]*N</span>
<span class="t" style="top:475px;font-size:12px;color:#1a1a1a;font-family:'Liberation Serif',serif;font-style:italic;transform:scaleX(1.0066);transform-origin:0 0;left:578.26px;line-height:14px;">(Компьютер жадынан массивке</span>
<span class="t" style="top:475px;font-size:11.7px;color:#111;transform:scaleX(1.0433);transform-origin:0 0;left:748.59px;line-height:13px;">N</span>
<span class="t" style="top:475px;font-size:12px;color:#1a1a1a;font-family:'Liberation Serif',serif;font-style:italic;transform:scaleX(0.9956);transform-origin:0 0;left:759.76px;line-height:14px;">орын</span>
<span class="t" style="top:488px;font-size:12px;color:#1a1a1a;font-family:'Liberation Serif',serif;font-style:italic;transform:scaleX(0.9955);transform-origin:0 0;left:482.76px;line-height:14px;">ажыратады)</span>
<span class="t" style="top:502px;font-size:11.7px;color:#111;transform:scaleX(0.9746);transform-origin:0 0;left:482.59px;line-height:13px;">t=0;z=0; p=0;</span>
<span class="t" style="top:516px;font-size:11.7px;color:#111;transform:scaleX(0.9534);transform-origin:0 0;left:482.59px;line-height:13px;">print('Kala ataularyn engiz')</span>
<span class="t" style="top:530px;font-size:11.7px;color:#111;transform:scaleX(0.9749);transform-origin:0 0;left:482.59px;line-height:13px;">for i in range(0,N):</span>
<span class="t" style="top:544px;font-size:11.7px;color:#111;transform:scaleX(1.0154);transform-origin:0 0;left:497.09px;line-height:13px;">S[i] = input()</span>
<span class="t" style="top:544px;font-size:12px;color:#1a1a1a;font-family:'Liberation Serif',serif;font-style:italic;transform:scaleX(0.9972);transform-origin:0 0;left:570.26px;line-height:14px;">(Қала атауын енгізеді)</span>
<span class="t" style="top:558px;font-size:11.7px;color:#111;transform:scaleX(1.0282);transform-origin:0 0;left:497.59px;line-height:13px;">A[i] = int(input())</span>
<span class="t" style="top:558px;font-size:12px;color:#1a1a1a;font-family:'Liberation Serif',serif;font-style:italic;transform:scaleX(1.0043);transform-origin:0 0;left:586.76px;line-height:14px;">(Сол қаладағы температураны енгізеді)</span>
<span class="t" style="top:572px;font-size:11.7px;color:#111;transform:scaleX(1.0212);transform-origin:0 0;left:482.59px;line-height:13px;">min=A[0]; max=A[0]</span>
<span class="t" style="top:585px;font-size:11.7px;color:#111;transform:scaleX(0.9749);transform-origin:0 0;left:482.59px;line-height:13px;">for i in range(0,N):</span>
<span class="t" style="top:599px;font-size:11.7px;color:#111;transform:scaleX(1.0754);transform-origin:0 0;left:504.09px;line-height:13px;">if A[i]&lt; min:</span>
<span class="t" style="top:599px;font-size:12px;color:#1a1a1a;font-family:'Liberation Serif',serif;font-style:italic;transform:scaleX(0.9977);transform-origin:0 0;left:565.76px;line-height:14px;">(Ең суық қаланың нөмірін табады)</span>
<span class="t" style="top:613px;font-size:11.7px;color:#111;transform:scaleX(1.0439);transform-origin:0 0;left:518.59px;line-height:13px;">min=A[i]; p=i</span>
<span class="t" style="top:627px;font-size:11.7px;color:#111;transform:scaleX(1.0508);transform-origin:0 0;left:504.09px;line-height:13px;">if A[i]&gt; max:</span>
<span class="t" style="top:641px;font-size:11.7px;color:#111;transform:scaleX(1.0260);transform-origin:0 0;left:518.59px;line-height:13px;">max=A[i]; z=i</span>
<span class="t" style="top:641px;font-size:12px;color:#1a1a1a;font-family:'Liberation Serif',serif;font-style:italic;transform:scaleX(0.9902);transform-origin:0 0;left:591.26px;line-height:14px;">(Ең жылы қаланың</span>
<span class="t" style="top:642px;font-size:11.5px;color:#555;font-family:'Liberation Mono',monospace;font-style:italic;transform:scaleX(1.0253);transform-origin:0 0;left:697.42px;line-height:13px;">нөмірін табады)</span>
<span class="t" style="top:655px;font-size:11.7px;color:#111;transform:scaleX(1.1292);transform-origin:0 0;left:504.09px;line-height:13px;">if A[i]&lt;0:</span>
<span class="t" style="top:655px;font-size:12px;color:#1a1a1a;font-family:'Liberation Serif',serif;font-style:italic;transform:scaleX(0.9954);transform-origin:0 0;left:551.26px;line-height:14px;">(Ауа райы нөлден төмен қалалар санын табады)</span>
<span class="t" style="top:668px;font-size:11.7px;color:#111;transform:scaleX(0.9749);transform-origin:0 0;left:518.59px;line-height:13px;">t+=1</span>
<span class="t" style="top:682px;font-size:11.7px;color:#111;transform:scaleX(0.9733);transform-origin:0 0;left:482.59px;line-height:13px;">print('En cuyk kala--&gt;', S[p])</span>
<span class="t" style="top:696px;font-size:11.7px;color:#111;transform:scaleX(0.9931);transform-origin:0 0;left:482.59px;line-height:13px;">print('En jyly kala--&gt;', S[t])</span>
<span class="t" style="top:710px;font-size:11.7px;color:#111;transform:scaleX(0.9444);transform-origin:0 0;left:482.59px;line-height:13px;">print('Nol gradustan tomen kalalar</span>
<span class="t" style="top:711px;font-size:11.5px;color:#555;font-family:'Liberation Mono',monospace;transform:scaleX(1.0165);transform-origin:0 0;left:654.92px;line-height:13px;">sany=',z)</span>
</section>
<section class="g" id="soda-bottombar">
<div class="a" style="left:122px;top:724px;width:1054px;height:22px;background:#d40000;"></div>
<div class="a" style="left:147px;top:724px;width:242px;height:22px;background:#a80000;"></div>
<div class="a" style="left:544px;top:724px;width:58px;height:22px;background:#a80000;"></div>
<span class="t" style="top:729px;font-size:12.5px;color:#fff;font-style:italic;transform:scaleX(1.0498);transform-origin:0 0;left:153.06px;line-height:14px;">Поиск</span>
<span class="t" style="top:728px;font-size:12.3px;color:#fff;transform:scaleX(0.8958);transform-origin:0 0;left:566.77px;line-height:14px;">64</span>
<span class="t" style="top:728px;font-size:12.3px;color:#fff;transform:scaleX(1.0968);transform-origin:0 0;left:604.27px;line-height:14px;">/112</span>
<span class="t" style="top:728px;font-size:12.3px;color:#fff;transform:scaleX(0.8763);transform-origin:0 0;left:1110.57px;line-height:14px;">100%</span>
<svg width="1360" height="768" viewBox="0 0 1360 768" style="left:0;top:0"><g fill="#fff"><rect x="129" y="731" width="2" height="2"/><rect x="129" y="735" width="2" height="2"/><rect x="129" y="739" width="2" height="2"/><rect x="133" y="735" width="2" height="2"/><rect x="133" y="739" width="2" height="2"/><rect x="137" y="739" width="2" height="2"/><rect x="1168" y="731" width="2" height="2"/><rect x="1168" y="735" width="2" height="2"/><rect x="1168" y="739" width="2" height="2"/><rect x="1164" y="735" width="2" height="2"/><rect x="1164" y="739" width="2" height="2"/><rect x="1160" y="739" width="2" height="2"/></g>
<g fill="none" stroke="#fff" stroke-width="1.600"><path d="M366.400 734.200l3.100 3.100 3.100-3.100M379.400 737.300l3.100-3.100 3.100 3.100M1145.400 733.400l3.100 3.100 3.100-3.100"/></g>
<g fill="none" stroke="#a60000" stroke-width="1.600"><circle cx="403" cy="733.800" r="4.300"/><path d="M400 737l-4.200 4.600" stroke-width="2.400"/></g>
<g fill="none" stroke="#fff" stroke-width="1.300"><circle cx="497" cy="734" r="8.300"/><circle cx="522" cy="734" r="8.300"/><circle cx="665" cy="734" r="8.300"/><circle cx="690" cy="734" r="8.300"/>
<path d="M502 734h-7.500M497.500 730.500l-3.500 3.500 3.500 3.500M492.500 730v8" stroke-width="1.500"/>
<path d="M527 734h-9.500M521 730.500l-3.500 3.500 3.500 3.500" stroke-width="1.500"/>
<path d="M660 734h9.500M666 730.500l3.500 3.500-3.500 3.500" stroke-width="1.500"/>
<path d="M685 734h7.500M689.500 730.500l3.500 3.500-3.500 3.500M694.500 730v8" stroke-width="1.500"/>
<circle cx="954" cy="734.500" r="8.800" stroke-width="1.400"/><path d="M949.500 734.500h9" stroke-width="2"/>
<circle cx="1087" cy="734.500" r="8.800" stroke-width="1.400"/><path d="M1082.500 734.500h9M1087 730v9" stroke-width="2"/>
<path d="M971 735h100" stroke-width="1.100"/>
<path d="M848 731v-4.500h4.500M848.500 727l5 5M862 731v-4.500h-4.500M861.500 727l-5 5M848 737v4.500h4.500M848.500 741l5-5M862 737v4.500h-4.500M861.500 741l-5-5" stroke-width="1.200"/>
<path d="M882.500 727.500h13v13.500h-13z" stroke-width="1.100"/>
<path d="M915.500 726v7h12v-7M915.500 741.200v-6.200h12v6.200" stroke-width="1.300"/><path d="M918.800 727.800h6M918.800 730.300h6M918.800 737.600h6M918.800 739.800h6" stroke-width="1"/>
</g><rect x="1021" y="729.800" width="4" height="10.700" fill="#fff"/></svg>
<span class="t" style="top:729px;font-size:8px;color:#fff;transform:scaleX(0.7830);transform-origin:0 0;left:884.02px;line-height:9px;">100</span>
</section>
<section class="g" id="soda-map">
<svg width="1360" height="768" viewBox="0 0 1360 768" style="left:0;top:0"><g transform="translate(655 196) scale(0.16142)" stroke="#6b6b4a" stroke-width="2.500" stroke-linejoin="round"><polygon points="55,380 100,370 130,350 200,350 240,360 235,410 190,430 130,460 150,500 185,540 170,600 190,640 165,700 190,720 55,720" fill="#5fb0df" stroke="none"/><polygon points="180,598 228,598 235,640 215,668 185,655" fill="#5fb0df" stroke="none"/><polygon points="70,240 90,200 120,160 160,150 200,130 240,125 290,150 310,190 305,240 285,250 270,270 230,285 160,275 100,265" fill="#c9a93f"/><polygon points="80,265 160,275 230,285 270,270 285,250 290,290 300,340 305,400 250,410 235,410 240,360 200,350 130,350 100,340 110,300" fill="#9fb8a6"/><polygon points="130,460 190,430 235,410 290,400 330,410 335,470 310,500 295,570 280,655 260,630 230,600 175,600 185,540 150,500" fill="#cfdc42"/><polygon points="285,250 310,190 340,200 420,195 470,215 520,200 545,260 535,320 575,350 545,395 500,365 440,430 400,450 340,465 330,410 305,400 300,340 290,290" fill="#d85c5c"/><polygon points="470,160 505,130 500,70 560,55 635,40 640,150 615,180 620,220 680,255 640,300 580,340 575,350 535,320 545,260 520,200 490,185" fill="#dfe680"/><polygon points="635,40 690,28 750,28 760,60 800,60 825,80 820,110 780,95 730,85 700,120 660,150 640,150" fill="#a8966c"/><polygon points="640,150 660,150 700,120 730,85 780,95 820,110 835,150 830,195 790,235 740,250 680,255 620,220 615,180" fill="#93b3a3"/><polygon points="825,80 890,30 930,80 975,150 960,200 975,225 940,215 900,240 850,210 830,195 835,150 820,110" fill="#ef8f8f"/><polygon points="545,395 575,350 580,340 640,300 680,255 740,250 790,235 830,195 850,210 900,240 940,215 930,280 945,370 980,375 960,400 900,400 870,440 730,455 670,455 620,450" fill="#b9dc88"/><polygon points="940,215 975,225 960,200 975,150 1010,160 1080,155 1130,180 1190,185 1220,210 1195,250 1195,310 1150,340 1120,345 1115,400 1050,375 980,375 945,370 930,280" fill="#f9f09c"/><polygon points="440,430 500,365 545,395 620,450 670,455 690,560 665,620 640,600 600,570 500,570 460,520 450,465" fill="#e9eba6"/><polygon points="395,470 430,440 455,455 455,500 440,535 400,535 385,510" fill="#5fb0df" stroke="none"/><polygon points="670,455 730,455 745,540 760,600 790,625 750,660 715,715 650,690 640,640 665,620 690,560" fill="#93b3a3"/><polygon points="730,455 870,440 890,490 925,555 940,580 900,590 860,610 790,625 760,600 745,540" fill="#d4895c"/><polygon points="900,400 960,400 980,375 1050,375 1115,400 1130,430 1090,470 1105,530 1090,585 1040,570 990,585 940,580 925,555 890,490 870,440" fill="#138a9a"/><polygon points="868,442 878,418 920,398 985,383 1000,395 950,410 910,425 888,458" fill="#6db8e6" stroke="none"/></g><g transform="translate(655 196) scale(0.16142)"><circle cx="213" cy="230" r="15" fill="#f6c442"/><ellipse cx="205" cy="241" rx="22" ry="10" fill="#f4f6fa"/><circle cx="201" cy="234" r="10" fill="#f4f6fa"/><circle cx="208" cy="337" r="15" fill="#f6c442"/><ellipse cx="200" cy="348" rx="22" ry="10" fill="#f4f6fa"/><circle cx="196" cy="341" r="10" fill="#f4f6fa"/><circle cx="238" cy="540" r="15" fill="#f6c442"/><ellipse cx="230" cy="551" rx="22" ry="10" fill="#f4f6fa"/><circle cx="226" cy="544" r="10" fill="#f4f6fa"/><circle cx="398" cy="292" r="15" fill="#f6c442"/><ellipse cx="390" cy="303" rx="22" ry="10" fill="#f4f6fa"/><circle cx="386" cy="296" r="10" fill="#f4f6fa"/><ellipse cx="540" cy="188" rx="22" ry="10" fill="#f4f6fa"/><circle cx="536" cy="181" r="10" fill="#f4f6fa"/><circle cx="678" cy="84" r="15" fill="#f6c442"/><ellipse cx="670" cy="95" rx="22" ry="10" fill="#f4f6fa"/><circle cx="666" cy="88" r="10" fill="#f4f6fa"/><ellipse cx="745" cy="178" rx="22" ry="10" fill="#f4f6fa"/><circle cx="741" cy="171" r="10" fill="#f4f6fa"/><circle cx="700" cy="230" r="15" fill="#f6c442"/><ellipse cx="880" cy="178" rx="22" ry="10" fill="#f4f6fa"/><circle cx="876" cy="171" r="10" fill="#f4f6fa"/><ellipse cx="1018" cy="253" rx="22" ry="10" fill="#f4f6fa"/><circle cx="1014" cy="246" r="10" fill="#f4f6fa"/><circle cx="1075" cy="297" r="15" fill="#f6c442"/><circle cx="788" cy="342" r="15" fill="#f6c442"/><circle cx="673" cy="422" r="15" fill="#f6c442"/><ellipse cx="665" cy="433" rx="22" ry="10" fill="#f4f6fa"/><circle cx="661" cy="426" r="10" fill="#f4f6fa"/><circle cx="518" cy="540" r="15" fill="#f6c442"/><ellipse cx="790" cy="563" rx="22" ry="10" fill="#f4f6fa"/><circle cx="786" cy="556" r="10" fill="#f4f6fa"/><circle cx="1015" cy="470" r="15" fill="#f6c442"/><circle cx="1012" cy="562" r="15" fill="#f6c442"/><ellipse cx="670" cy="683" rx="22" ry="10" fill="#f4f6fa"/><circle cx="666" cy="676" r="10" fill="#f4f6fa"/></g></svg>
<span class="t" style="top:226px;font-size:3.4px;color:#4a3f5c;font-family:'Liberation Serif',serif;font-weight:700;left:689.71px;line-height:4px;">Орал</span>
<span class="t" style="top:230px;font-size:3.4px;color:#4a3f5c;font-family:'Liberation Serif',serif;font-weight:700;left:691.32px;line-height:4px;">-36</span>
<span class="t" style="top:245px;font-size:3.4px;color:#4a3f5c;font-family:'Liberation Serif',serif;font-weight:700;left:687.28px;line-height:4px;">Атырау</span>
<span class="t" style="top:249px;font-size:3.4px;color:#4a3f5c;font-family:'Liberation Serif',serif;font-weight:700;left:690.84px;line-height:4px;">-5</span>
<span class="t" style="top:276px;font-size:3.4px;color:#4a3f5c;font-family:'Liberation Serif',serif;font-weight:700;left:689.71px;line-height:4px;">Ақтау</span>
<span class="t" style="top:280px;font-size:3.4px;color:#4a3f5c;font-family:'Liberation Serif',serif;font-weight:700;left:693.74px;line-height:4px;">+2</span>
<span class="t" style="top:236px;font-size:3.4px;color:#4a3f5c;font-family:'Liberation Serif',serif;font-weight:700;left:716.34px;line-height:4px;">Ақтөбе</span>
<span class="t" style="top:240px;font-size:3.4px;color:#4a3f5c;font-family:'Liberation Serif',serif;font-weight:700;left:721.18px;line-height:4px;">-3</span>
<span class="t" style="top:217px;font-size:3.4px;color:#4a3f5c;font-family:'Liberation Serif',serif;font-weight:700;left:739.26px;line-height:4px;">Қостанай</span>
<span class="t" style="top:221px;font-size:3.4px;color:#4a3f5c;font-family:'Liberation Serif',serif;font-weight:700;left:744.27px;line-height:4px;">-1</span>
<span class="t" style="top:203px;font-size:3.4px;color:#4a3f5c;font-family:'Liberation Serif',serif;font-weight:700;left:759.92px;line-height:4px;">Петропавл</span>
<span class="t" style="top:206px;font-size:3.4px;color:#4a3f5c;font-family:'Liberation Serif',serif;font-weight:700;left:767.99px;line-height:4px;">-7</span>
<span class="t" style="top:216px;font-size:3.4px;color:#4a3f5c;font-family:'Liberation Serif',serif;font-weight:700;left:771.55px;line-height:4px;">Көкшетау</span>
<span class="t" style="top:219px;font-size:3.4px;color:#4a3f5c;font-family:'Liberation Serif',serif;font-weight:700;left:776.87px;line-height:4px;">-1</span>
<span class="t" style="top:224px;font-size:3.4px;color:#4a3f5c;font-family:'Liberation Serif',serif;font-weight:700;left:763.96px;line-height:4px;">Нұр-Сұлтан</span>
<span class="t" style="top:228px;font-size:3.4px;color:#4a3f5c;font-family:'Liberation Serif',serif;font-weight:700;left:771.22px;line-height:4px;">-5</span>
<span class="t" style="top:215px;font-size:3.4px;color:#4a3f5c;font-family:'Liberation Serif',serif;font-weight:700;left:794.14px;line-height:4px;">Павлодар</span>
<span class="t" style="top:219px;font-size:3.4px;color:#4a3f5c;font-family:'Liberation Serif',serif;font-weight:700;left:799.47px;line-height:4px;">-19</span>
<span class="t" style="top:228px;font-size:3.4px;color:#4a3f5c;font-family:'Liberation Serif',serif;font-weight:700;left:817.23px;line-height:4px;">Семей</span>
<span class="t" style="top:232px;font-size:3.4px;color:#4a3f5c;font-family:'Liberation Serif',serif;font-weight:700;left:821.26px;line-height:4px;">-15</span>
<span class="t" style="top:236px;font-size:3.4px;color:#4a3f5c;font-family:'Liberation Serif',serif;font-weight:700;left:828.53px;line-height:4px;">Өскемен</span>
<span class="t" style="top:240px;font-size:3.4px;color:#4a3f5c;font-family:'Liberation Serif',serif;font-weight:700;left:830.95px;line-height:4px;">-18</span>
<span class="t" style="top:243px;font-size:3.4px;color:#4a3f5c;font-family:'Liberation Serif',serif;font-weight:700;left:780.10px;line-height:4px;">Қарағанды</span>
<span class="t" style="top:246px;font-size:3.4px;color:#4a3f5c;font-family:'Liberation Serif',serif;font-weight:700;left:784.14px;line-height:4px;">-3</span>
<span class="t" style="top:257px;font-size:3.4px;color:#4a3f5c;font-family:'Liberation Serif',serif;font-weight:700;left:760.73px;line-height:4px;">Жезқазған</span>
<span class="t" style="top:261px;font-size:3.4px;color:#4a3f5c;font-family:'Liberation Serif',serif;font-weight:700;left:766.70px;line-height:4px;">0</span>
<span class="t" style="top:275px;font-size:3.4px;color:#4a3f5c;font-family:'Liberation Serif',serif;font-weight:700;left:737.00px;line-height:4px;">Қызылорда</span>
<span class="t" style="top:279px;font-size:3.4px;color:#4a3f5c;font-family:'Liberation Serif',serif;font-weight:700;left:740.55px;line-height:4px;">+11</span>
<span class="t" style="top:278px;font-size:3.4px;color:#4a3f5c;font-family:'Liberation Serif',serif;font-weight:700;left:780.10px;line-height:4px;">Тараз</span>
<span class="t" style="top:282px;font-size:3.4px;color:#4a3f5c;font-family:'Liberation Serif',serif;font-weight:700;left:783.33px;line-height:4px;">+10</span>
<span class="t" style="top:264px;font-size:3.4px;color:#4a3f5c;font-family:'Liberation Serif',serif;font-weight:700;left:816.42px;line-height:4px;">Талдықорған</span>
<span class="t" style="top:267px;font-size:3.4px;color:#4a3f5c;font-family:'Liberation Serif',serif;font-weight:700;left:821.26px;line-height:4px;">-2</span>
<span class="t" style="top:278px;font-size:3.4px;color:#4a3f5c;font-family:'Liberation Serif',serif;font-weight:700;left:817.23px;line-height:4px;">Алматы</span>
<span class="t" style="top:282px;font-size:3.4px;color:#4a3f5c;font-family:'Liberation Serif',serif;font-weight:700;left:821.26px;line-height:4px;">+2</span>
<span class="t" style="top:293px;font-size:3.4px;color:#4a3f5c;font-family:'Liberation Serif',serif;font-weight:700;left:762.83px;line-height:4px;">Түркістан</span>
<span class="t" style="top:297px;font-size:3.4px;color:#4a3f5c;font-family:'Liberation Serif',serif;font-weight:700;left:761.54px;line-height:4px;">Шымкент</span>
<span class="t" style="top:301px;font-size:3.4px;color:#4a3f5c;font-family:'Liberation Serif',serif;font-weight:700;left:764.77px;line-height:4px;">+16</span>
</section>
<section class="g" id="soda-icons">
<span class="t" style="top:82px;font-size:28.5px;color:#4a7ebb;transform:scaleX(1.0936);transform-origin:0 0;left:182.70px;line-height:32px;-webkit-text-stroke:.9px #4a7ebb;">A</span>
<div class="a" style="left:201.8px;top:87px;width:9.3px;height:14px;background:#f0b45c;"></div>
<svg width="1360" height="768" viewBox="0 0 1360 768" style="left:0;top:0"><path d="M206.200 87.800v12.400M204.200 87.500c1 0 1.700.3 2 .8.300-.5 1-.8 2-.8M204.200 100.500c1 0 1.700-.3 2-.8.300.5 1 .8 2 .8" fill="none" stroke="#111" stroke-width="1.100"/>
<!-- hand -->
<path transform="translate(0 82.200) scale(.985 1.065) translate(1.900 -82.200)" d="M130.400 97.800c-.8-1.300 0-2.700 1.600-2.600 1.600.1 3.200 1.300 4.400 2.600 1.100 1.200 1.700 2.700 2.500 2.700.9 0 .9-1.500.9-2.700l-.7-12.300c-.1-1.500.7-2.200 1.900-2.200 1.300 0 2 .8 2.100 2.200l.4 8.800.4-9.600c.1-1.600.8-2.400 2-2.400 1.300 0 2 .8 2 2.300l-.5 9.500 1-8.700c.2-1.500.9-2.100 2-2 1.200.1 1.800.9 1.700 2.300l-1.200 9.600 2-6c.5-1.400 1.300-2 2.400-1.600 1 .4 1.300 1.300 1 2.700-.8 3.500-1.700 6-1.900 8.600-.2 3 .1 5.500-.6 7.400-.8 2-2.800 3.300-6.500 3.400-3.700.1-6.300-.4-8.400-2.600-2.600-2.700-4.200-4.300-5.400-6.600-1-1.900-2.200-3.400-3.100-4.800z" fill="#fff" stroke="#8a8a8a" stroke-width="1" stroke-linejoin="round"/>
<!-- pencil / edit -->
<path d="M266.500 83.500h-21v24h7M266.500 99.500v8h-5" fill="none" stroke="#777" stroke-width="1"/><path d="M243 110.200h7.500" stroke="#777" stroke-width="1"/>
<g transform="translate(263.2 98.600) rotate(42.500)"><rect x="-2.900" y="-11.300" width="5.800" height="20.500" fill="#ff9a16"/><rect x="-.9" y="-11.300" width="1.800" height="20.500" fill="#ffc877"/>
<rect x="-2.900" y="-13.300" width="5.800" height="2.200" fill="#d8d8d8"/><path d="M-2.900 -13.300v-1.200a2.900 2.900 0 0 1 5.800 0v1.200z" fill="#d9583a"/>
<path d="M-2.900 9.200h5.800l-2.900 5.300z" fill="#8a8a8a"/></g>
<!-- zoom -->
<g fill="none"><circle cx="317.200" cy="94.500" r="4.600" stroke="#4a86c8" stroke-width="1.300"/><path d="M320.600 98.200l4.600 5" stroke="#4a86c8" stroke-width="2.200" stroke-linecap="round"/>
<path d="M323.800 90.800h3v7M315.300 101v3h5.500" stroke="#666" stroke-width="1"/></g>
<!-- navigation signpost -->
<path d="M385 89v16" stroke="#555" stroke-width="1.400"/>
<path d="M379.500 92h11l1.700 1.800-1.700 1.800h-11l1-1.800z" fill="#3d9178"/><path d="M390.500 97.300h-11l-1.700 1.800 1.700 1.800h11l-1-1.800z" fill="#3f78c0"/>
<rect x="384.200" y="93" width="1.600" height="1.600" fill="#fff"/><rect x="384.200" y="98.300" width="1.600" height="1.600" fill="#fff"/>
<!-- doc view: four pages -->
<path d="M448 88.200h4.800l2 2v5.400h-6.800z" fill="#d9492f"/><path d="M449.300 90.600h3.200M449.300 92.600h3.200" stroke="#fff" stroke-width=".9"/>
<g fill="#fff" stroke="#666" stroke-width="1"><path d="M456.500 88.500h4l2 2v5h-6zM448.500 98.500h4l2 2v4.500h-6zM456.500 98.500h4l2 2v4.500h-6z"/></g>
<!-- side by side -->
<g fill="#fff" stroke="#777" stroke-width="1"><path d="M525.500 90.500h5.500l3.500 3.500v8.500h-9zM531 90.500v3.500h3.500M537.700 90.500h5.500l3.500 3.500v8.500h-9zM543.200 90.500v3.500h3.500"/></g>
<!-- page view (eye) -->
<path d="M610.800 94v-4.500h7l3.700 3.700v10h-4M617.800 89.500v3.700h3.700" fill="none" stroke="#666" stroke-width="1"/>
<path d="M606 101.100c1.800-2.400 3.800-3.500 6-3.500s4.200 1.100 6 3.500c-1.800 2.400-3.800 3.500-6 3.500s-4.200-1.100-6-3.500z" fill="#3f78c0"/><circle cx="612" cy="101.100" r="2.100" fill="#fff"/><circle cx="612" cy="101.100" r="1" fill="#3f78c0"/>
<!-- rotate -->
<path d="M673.700 94v-4.500h7l3.700 3.700v10h-5.500M680.700 89.500v3.700h3.700" fill="none" stroke="#666" stroke-width="1"/>
<path d="M674 104.600c-2.800-.6-3.800-2.300-3.600-3.800.3-2 2.300-3.200 5-3.200h4" fill="none" stroke="#3f78c0" stroke-width="1.500"/><path d="M677 94.600l3.200 3-3.200 3" fill="none" stroke="#3f78c0" stroke-width="1.500"/>
<!-- snapshot -->
<path d="M734.500 91.500v-10h16v10" fill="none" stroke="#777" stroke-width="1" stroke-dasharray="2.600 1.600"/>
<path d="M725.500 95.900h5.300l1.200-2.500h9.400l1.200 2.500h.4c1.300 0 2.300 1 2.300 2.300v10.500c0 1.300-1 2.300-2.300 2.300h-17.500c-1.300 0-2.300-1-2.300-2.300v-10.500c0-1.300 1-2.300 2.300-2.300z" fill="#4a7db8"/>
<rect x="724.800" y="94.400" width="3.300" height="2" fill="#4a7db8"/>
<circle cx="736.200" cy="103" r="4.700" fill="#4a7db8" stroke="#fff" stroke-width="2"/><path d="M733.900 102.700a2.400 2.400 0 0 1 2.300-2.100" fill="none" stroke="#fff" stroke-width=".8"/>
<path d="M745 92l7 3-3 1 2.300 3-1.300 1-2.300-3-1.700 2.500z" fill="#777"/>
<!-- page snapshot -->
<path d="M786.500 84.500h21v24h-21z" fill="#fff" stroke="#555" stroke-width="1"/>
<g fill="none" stroke="#4a7db8" stroke-width="1"><path d="M784.500 87v-4.500h5M805 82.500h5v4.500M810 106v4.500h-5M789.500 110.500h-5v-4.500"/></g>
<path d="M791 90.300h2.600l.8-1.300h5.200l.8 1.300h2.500c1 0 1.800.8 1.800 1.800v7.800c0 1-.8 1.800-1.800 1.800h-11.900c-1 0-1.800-.8-1.800-1.800v-7.800c0-1 .8-1.800 1.800-1.800z" fill="#4a7db8"/>
<circle cx="798" cy="96" r="3.300" fill="#4a7db8" stroke="#fff" stroke-width="1.500"/><path d="M796.300 95.800a1.700 1.700 0 0 1 1.700-1.600" fill="none" stroke="#fff" stroke-width=".6"/><circle cx="792" cy="92.500" r=".6" fill="#fff"/>
<!-- settings gear -->
<g transform="translate(871.800 95.900)" fill="#ffa93f"><circle r="11.300"/><rect x="-2.100" y="-14.700" width="4.200" height="5" transform="rotate(0)"/><rect x="-2.100" y="-14.700" width="4.200" height="5" transform="rotate(36)"/><rect x="-2.100" y="-14.700" width="4.200" height="5" transform="rotate(72)"/><rect x="-2.100" y="-14.700" width="4.200" height="5" transform="rotate(108)"/><rect x="-2.100" y="-14.700" width="4.200" height="5" transform="rotate(144)"/><rect x="-2.100" y="-14.700" width="4.200" height="5" transform="rotate(180)"/><rect x="-2.100" y="-14.700" width="4.200" height="5" transform="rotate(216)"/><rect x="-2.100" y="-14.700" width="4.200" height="5" transform="rotate(252)"/><rect x="-2.100" y="-14.700" width="4.200" height="5" transform="rotate(288)"/><rect x="-2.100" y="-14.700" width="4.200" height="5" transform="rotate(324)"/><circle r="6.800" fill="#fff"/></g>
<path d="M872 98.500l3-3h14v16.500h-10l-7-8z" fill="#fff"/>
<g fill="none" stroke="#4a7db8" stroke-width="1"><path d="M871.500 98.500h16v10h-16z" fill="#fff"/><path d="M879.500 108.500v3M875.500 111.700h8"/></g>
<g fill="none" stroke="#777" stroke-width=".9"><path d="M875 100.500v1.800h9v-1.800M875 106.700v-1.800h9v1.800M874.500 103.600h10"/></g>
<!-- multi-document -->
<g fill="none" stroke="#4a7db8"><path d="M1007.500 84.500h31v25h-31z" stroke-width="1"/><path d="M1007 85.300h32" stroke-width="2.600"/><path d="M1018.500 86.500v4h20M1028.200 86.500v4" stroke-width="1"/></g>
<!-- single-document -->
<g fill="none" stroke="#4a7db8" stroke-width="1"><path d="M1096.500 82.500h25v19"/><path d="M1094.500 86.500h25v19"/><path d="M1092.500 90.500h25v20h-25z" fill="#fff"/></g>
<path d="M1096 83.300h26M1094 87.400h26" stroke="#4a7db8" stroke-width="2.400"/><path d="M1092 91.800h26" stroke="#4a7db8" stroke-width="3.400"/>
<g transform="translate(.6 .8)"><path d="M135 203h23v19.500h-23z" fill="#fff" stroke="#666" stroke-width="1"/><path d="M134.500 203.600h24" stroke="#4a7db8" stroke-width="2.200"/><path d="M143 204.500v18" stroke="#666" stroke-width="1"/>
<rect x="138" y="206.700" width="3.200" height="3.600" fill="#d9492f"/><rect x="138" y="211.800" width="3.200" height="3.600" fill="#5a9b85"/><rect x="138" y="216.800" width="3.200" height="3.600" fill="#3f78c0"/>
<rect x="145.500" y="207.700" width="9.800" height="11.400" fill="#a87fd0"/><path d="M148.500 211.700l1-.9 1 .9 1-.9 1 .9" fill="none" stroke="#fff" stroke-width=".7"/>
</g>
<!-- bookmark -->
<path d="M137.300 239h17.600v19.500h-15.600c-1.100 0-2-.9-2-2z" fill="#4a7db8"/><path d="M140.800 239v19.500" stroke="#fff" stroke-width="1.200"/>
<path d="M145.500 239h6.200v12.700l-3.100-2.700-3.100 2.700z" fill="#d9492f" stroke="#fff" stroke-width=".9"/>
<!-- layers -->
<path d="M146.700 275.100l9.400 4.700-9.400 4.700-9.400-4.700z" fill="#6fa896"/>
<path d="M135.800 283l10.900 6 10.900-6" fill="none" stroke="#ff9a16" stroke-width="2"/><path d="M135.800 287.500l10.900 6 10.900-6" fill="none" stroke="#3f78c0" stroke-width="2"/>
<!-- globe link -->
<circle cx="146.300" cy="320" r="9.300" fill="#6fa896"/>
<g fill="none" stroke="#fff" stroke-width=".9"><path d="M137.500 317h17.600M137.500 323h12M143.300 311.500c-1.500 5.500-1.500 11.500 0 17M149.300 311.500c1 3 1.400 6 1.300 9"/></g>
<g fill="none" stroke="#fff" stroke-width="3.600"><rect x="144" y="325" width="7" height="4.800" rx="2.400"/><rect x="150" y="325" width="7" height="4.800" rx="2.400"/></g>
<g fill="none" stroke="#ff9a16" stroke-width="1.700"><rect x="144" y="325" width="7" height="4.800" rx="2.400"/><rect x="150" y="325" width="7" height="4.800" rx="2.400"/></g>
<path d="M1143.600 220.700l7.400-7.100" stroke="#6fa896" stroke-width="4" stroke-linecap="round"/>
<path d="M1159.500 203.200c-3-1.200-6.300-.2-8.200 2.200-1.900 2.500-1.800 5.800.1 8 2.200 2.500 5.800 3 8.500 1.400 2.300-1.400 3.500-4 3-6.600l-4.300 3.300-3.200-.6-1-3.200z" fill="#6e6e6e"/>
<!-- binoculars -->
<g fill="#666"><rect x="1145.800" y="239.300" width="5.200" height="1.800"/><rect x="1154.300" y="239.300" width="5.200" height="1.800"/>
<rect x="1142.400" y="250.200" width="7.600" height="2.400"/><rect x="1155.100" y="250.200" width="7.600" height="2.400"/><rect x="1142.400" y="254.400" width="7.600" height="3.300"/><rect x="1155.100" y="254.400" width="7.600" height="3.300"/></g>
<path d="M1145 242h15l1.800 6.800h-18.600z" fill="#4a7db8"/><rect x="1151.200" y="242.300" width="2.700" height="5.600" rx="1" fill="#4a7db8" stroke="#fff" stroke-width=".8"/>
<!-- folder search -->
<path d="M1141.700 276.500c0-1 .6-1.600 1.600-1.600h5.200l1.600 1.600h9.600c1 0 1.600.6 1.600 1.600v2l1.400.2-1.700 9c-.2 1-.8 1.600-1.800 1.600h-15.500c-1 0-1.600-.6-1.800-1.600z" fill="#ffa93f"/>
<path d="M1144 279.500l1-2.500h13l-.5 2.500" fill="none" stroke="#fff" stroke-width=".8"/>
<path d="M1147.500 281h15.500v13h-15.500z" fill="#fff" opacity=".0"/>
<g><path d="M1150.200 283.300h10.400l1.500 5h-13.400z" fill="#4a7db8" stroke="#fff" stroke-width=".9"/><rect x="1154.400" y="283.800" width="2" height="4" rx=".8" fill="#ffa93f" stroke="#fff" stroke-width=".6"/>
<g fill="#666" stroke="#fff" stroke-width=".5"><rect x="1151" y="281.300" width="3.600" height="1.500"/><rect x="1156.600" y="281.300" width="3.600" height="1.500"/><rect x="1148.400" y="289.300" width="5.600" height="1.900"/><rect x="1157" y="289.300" width="5.600" height="1.900"/><rect x="1148.400" y="292" width="5.600" height="1.900"/><rect x="1157" y="292" width="5.600" height="1.900"/></g></g>
<!-- comment page -->
<path d="M1146.500 310.500h10.500l5.500 5.500v14.500h-16z" fill="#f3f3f3" stroke="#666" stroke-width="1"/><path d="M1157 310.500v5.500h5.500" fill="#fff" stroke="#666" stroke-width="1"/>
<path d="M1141.200 316h11.700v8.700h-8.200l-2 2.800v-2.800h-1.500z" fill="#f5a02c"/><path d="M1143 319h8M1143 321.700h8" stroke="#ffe0b0" stroke-width="1"/>
<!-- paperclip -->
<path d="M1148.500 362.500l8.500-7.600c1.300-1.200 3-1 .6.900l-9.300 8.300c-2.600 2.300-6.200-.7-3.500-3.500l11.600-10.500c3.800-3.300 8.300 1 4.700 4.600l-9.600 8.700" fill="none" stroke="#777" stroke-width="1.300"/>
<!-- award -->
<g transform="translate(1152.200 389.600)"><circle r="8.600" fill="#fff" stroke="#d9583a" stroke-width="1.800" stroke-dasharray="3.200 1.300"/><circle r="8" fill="none" stroke="#d9583a" stroke-width="1.300"/><circle r="6.600" fill="#fff"/><circle r="5.700" fill="#ff9300"/></g>
<path d="M1148 399.800l4.200 2.300 4.600-2.300v6.300l-4.500-2.600-4.300 2.600z" fill="#d9583a"/>
</svg>
</section>
</body>
</html>
